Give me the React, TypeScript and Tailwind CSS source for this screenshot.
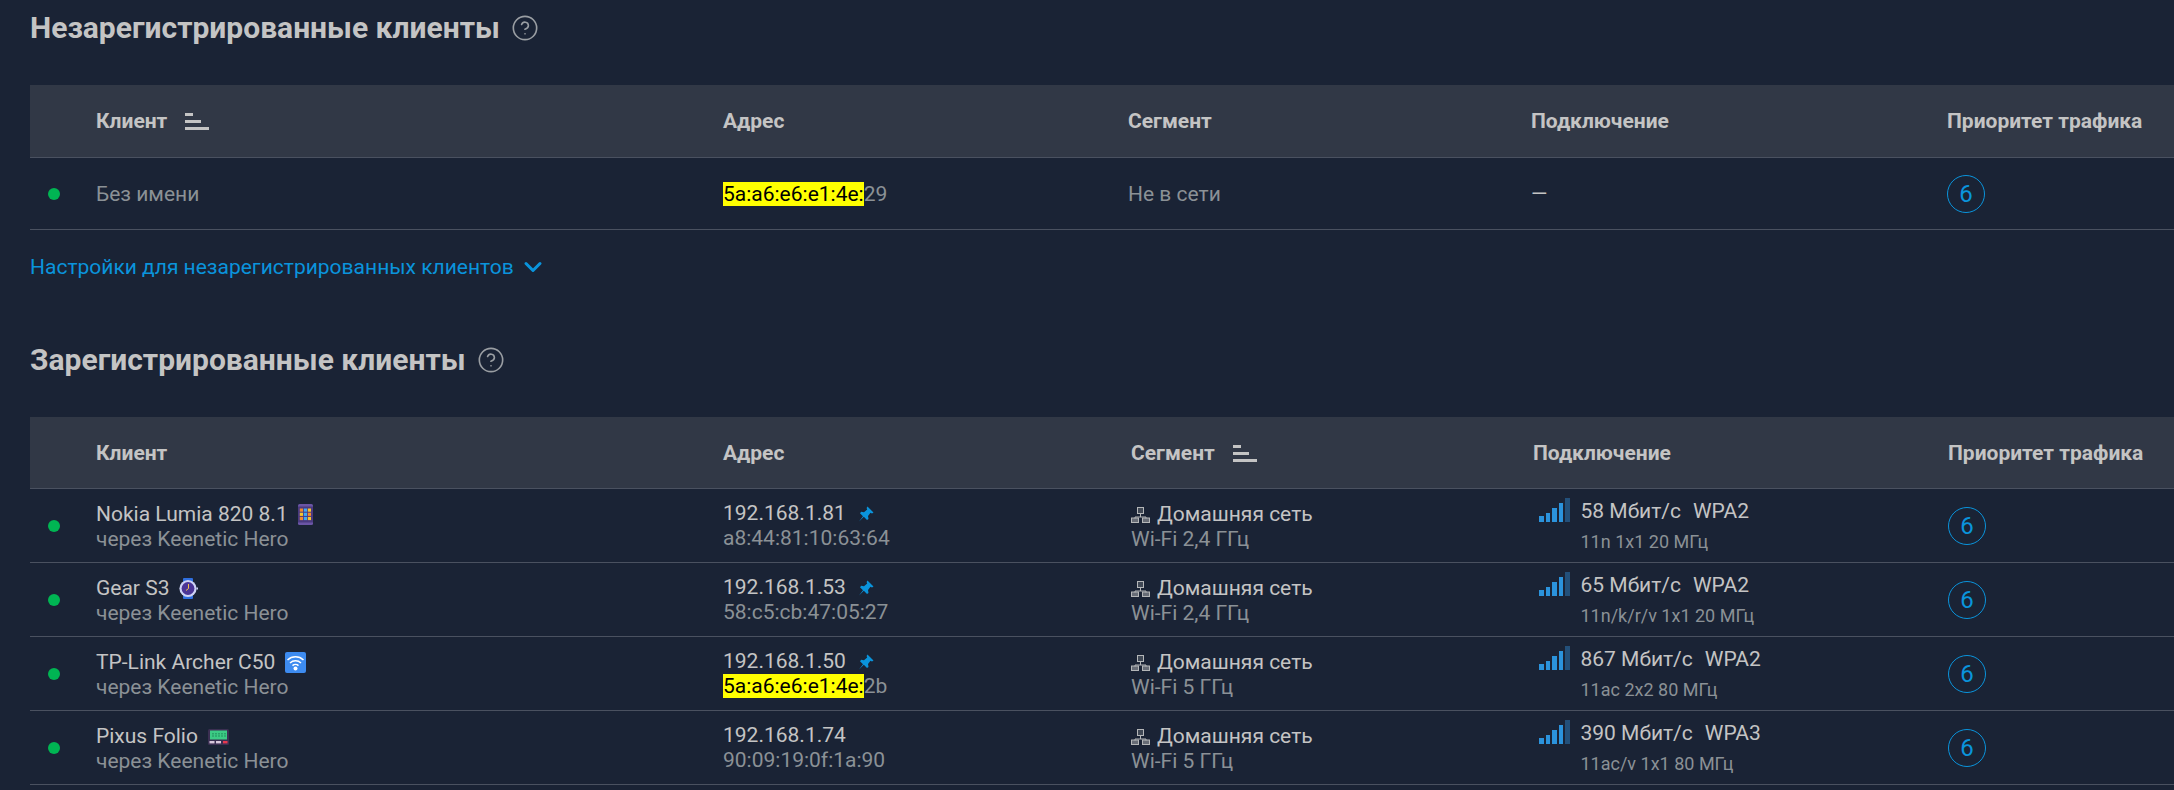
import { ChevronDown, CircleHelp } from 'lucide-react'

const FIRST_COLS = 'grid grid-cols-[66px_627px_405px_403px_416px_1fr]'
const SECOND_COLS = 'grid grid-cols-[66px_627px_408px_402px_415px_1fr]'

function SortIcon() {
  return (
    <span className="flex w-6 flex-col gap-[4px]">
      <span className="h-[3px] w-2 bg-[#c4c4c4]" />
      <span className="h-[3px] w-4 bg-[#c4c4c4]" />
      <span className="h-[3px] w-6 bg-[#c4c4c4]" />
    </span>
  )
}

function Dot() {
  return <span className="ml-[18px] block h-3 w-3 rounded-full bg-[#00b553]" />
}

function Title({ children }: { children: string }) {
  return (
    <div className="flex items-center gap-[11px]">
      <h2 className="text-[30px] leading-8 font-bold text-[#c4c4c4]">{children}</h2>
      <CircleHelp size={28} strokeWidth={1.4} className="text-[#9a9ea3]" />
    </div>
  )
}

function Pin() {
  return (
    <svg width="16" height="16" viewBox="0 0 16 16" className="shrink-0">
      <path d="M9.5 0.5 15.5 6.5 14 7.5 12.5 6.8 10 10 10.5 13 9 14 5.8 10.8 1 15.5 5 10.2 2 7.2 3.2 5.8 6 6.2 9.2 3.5 8.6 2Z" fill="#0a94dc" />
    </svg>
  )
}

function NetIcon() {
  return (
    <svg width="19" height="16" viewBox="0 0 19 16" className="shrink-0" fill="none" stroke="#b4b6b8" strokeWidth="1">
      <rect x="6.5" y="0.5" width="6" height="6" fill="#b4b6b8" fillOpacity="0.25" />
      <path d="M9.5 7v3M4 11.5V10h11v1.5" />
      <rect x="0.5" y="11" width="7" height="4.5" fill="#b4b6b8" fillOpacity="0.5" />
      <rect x="11.5" y="11" width="7" height="4.5" fill="#b4b6b8" fillOpacity="0.5" />
    </svg>
  )
}

function Bars() {
  return (
    <span className="flex h-6 shrink-0 items-end gap-[2px]">
      <span className="h-[6px] w-[4.5px] bg-[#2b93dc]" />
      <span className="h-[9px] w-[4.5px] bg-[#2b93dc]" />
      <span className="h-[14px] w-[4.5px] bg-[#2b93dc]" />
      <span className="h-[19px] w-[4.5px] bg-[#2b93dc]" />
      <span className="h-6 w-[4.5px] bg-[#23507a]" />
    </span>
  )
}

function Priority() {
  return (
    <span className="flex h-[38px] w-[38px] items-center justify-center rounded-full border border-[#0a94dc] text-2xl text-[#0a94dc]">
      6
    </span>
  )
}

function PhoneIcon() {
  const colors = ['#f08a2e', '#3fa9f5', '#f5c62e', '#f5c62e', '#3fa9f5', '#f08a2e', '#f08a2e', '#3fa9f5', '#f5c62e']
  return (
    <svg width="15" height="21" viewBox="0 0 15 21">
      <rect width="15" height="21" rx="1.5" fill="#6a55a5" />
      <rect y="2.5" width="15" height="16" fill="#4a3a80" />
      {colors.map((c, i) => (
        <rect key={i} x={1.8 + (i % 3) * 4} y={4.5 + Math.floor(i / 3) * 4.2} width="3.2" height="3.2" fill={c} />
      ))}
    </svg>
  )
}

function WatchIcon() {
  return (
    <svg width="19" height="21" viewBox="0 0 19 21">
      <rect x="4" y="0" width="10" height="21" rx="1" fill="#2f6fe0" />
      <circle cx="9" cy="10.5" r="8.6" fill="#cdd2f5" />
      <circle cx="9" cy="10.5" r="6.4" fill="#4b3596" />
      <path d="M9.5 6v4.5L7 12.5" stroke="#f3c64a" strokeWidth="1" fill="none" />
      <rect x="17.5" y="9.5" width="1.5" height="2" fill="#cdd2f5" />
    </svg>
  )
}

function WifiIcon() {
  return (
    <svg width="21" height="21" viewBox="0 0 21 21" fill="none">
      <rect width="21" height="21" rx="2" fill="#3d8bf0" />
      <path d="M2.5 8a11.5 11.5 0 0 1 16 0M5 11a8 8 0 0 1 11 0M7.5 13.6a4.4 4.4 0 0 1 6 0" stroke="#fff" strokeWidth="1.5" />
      <circle cx="10.5" cy="16.5" r="2" fill="#fff" />
    </svg>
  )
}

function PagerIcon() {
  return (
    <svg width="21" height="16" viewBox="0 0 21 16">
      <rect width="21" height="16" rx="1.5" fill="#3b2f52" />
      <rect x="2" y="1.5" width="17" height="9" fill="#3ccb85" />
      <path d="M5 4v4.5M8 4v4.5M11 4v4.5M14 4v4.5M17 4v4.5" stroke="#1f8a5a" strokeWidth="1.2" strokeDasharray="1.5 0.8" />
      <rect x="1.5" y="12" width="5" height="2.4" fill="#d8c8dc" />
      <rect x="8" y="12" width="5" height="2.4" fill="#d8c8dc" />
      <rect x="15" y="12" width="4.5" height="2.4" fill="#e8384f" />
    </svg>
  )
}

const CLIENTS = [
  { name: 'Nokia Lumia 820 8.1', icon: <PhoneIcon />, ip: '192.168.1.81', pin: true, mac: 'a8:44:81:10:63:64', band: 'Wi-Fi 2,4 ГГц', speed: '58 Мбит/с', sec: 'WPA2', mode: '11n 1x1 20 МГц' },
  { name: 'Gear S3', icon: <WatchIcon />, ip: '192.168.1.53', pin: true, mac: '58:c5:cb:47:05:27', band: 'Wi-Fi 2,4 ГГц', speed: '65 Мбит/с', sec: 'WPA2', mode: '11n/k/r/v 1x1 20 МГц' },
  { name: 'TP-Link Archer C50', icon: <WifiIcon />, ip: '192.168.1.50', pin: true, mac: '', band: 'Wi-Fi 5 ГГц', speed: '867 Мбит/с', sec: 'WPA2', mode: '11ac 2x2 80 МГц' },
  { name: 'Pixus Folio', icon: <PagerIcon />, ip: '192.168.1.74', pin: false, mac: '90:09:19:0f:1a:90', band: 'Wi-Fi 5 ГГц', speed: '390 Мбит/с', sec: 'WPA3', mode: '11ac/v 1x1 80 МГц' },
]

function Masked({ rest }: { rest: string }) {
  return (
    <>
      <span className="bg-[#ffff00] text-black">5a:a6:e6:e1:4e:</span>
      {rest}
    </>
  )
}

export default function App() {
  return (
    <div className="h-[790px] overflow-hidden bg-[#1a2335] pt-3 pl-[30px] font-['Roboto',sans-serif] text-[21px] leading-[25px] text-[#c4c4c4]">
      <Title>Незарегистрированные клиенты</Title>

      <div className="mt-[41px]">
        <div className={`${FIRST_COLS} h-[73px] items-center border-b border-[#4a5160] bg-[#313846] font-bold`}>
          <span />
          <span className="flex items-center gap-[18px]">
            Клиент
            <SortIcon />
          </span>
          <span>Адрес</span>
          <span>Сегмент</span>
          <span>Подключение</span>
          <span>Приоритет трафика</span>
        </div>
        <div className={`${FIRST_COLS} h-[72px] items-center border-b border-[#4a5160] pt-[1px] text-[#8b9196]`}>
          <Dot />
          <span>Без имени</span>
          <span>
            <Masked rest="29" />
          </span>
          <span>Не в сети</span>
          <span className="text-[#c4c4c4]">—</span>
          <Priority />
        </div>
      </div>

      <button className="mt-[23px] flex items-center gap-[5px] text-[#0a94dc]">
        Настройки для незарегистрированных клиентов
        <ChevronDown size={28} strokeWidth={2.6} />
      </button>

      <div className="mt-[63px]">
        <Title>Зарегистрированные клиенты</Title>
      </div>

      <div className="mt-[41px]">
        <div className={`${SECOND_COLS} h-[72px] items-center border-b border-[#4a5160] bg-[#313846] pt-[1px] font-bold`}>
          <span />
          <span>Клиент</span>
          <span>Адрес</span>
          <span className="flex items-center gap-[18px]">
            Сегмент
            <SortIcon />
          </span>
          <span>Подключение</span>
          <span>Приоритет трафика</span>
        </div>
        {CLIENTS.map((c) => (
          <div key={c.name} className={`${SECOND_COLS} h-[74px] items-center border-b border-[#4a5160]`}>
            <Dot />
            <div className="pt-[3px]">
              <div className="flex items-center gap-[10px]">
                {c.name}
                {c.icon}
              </div>
              <div className="text-[#8b9196]">через Keenetic Hero</div>
            </div>
            <div className="pt-[1px]">
              <div className="flex items-center gap-3">
                {c.ip}
                {c.pin && <Pin />}
              </div>
              <div className="text-[#8b9196]">{c.mac || <Masked rest="2b" />}</div>
            </div>
            <div className="pt-[3px]">
              <div className="flex items-center gap-[7px]">
                <NetIcon />
                Домашняя сеть
              </div>
              <div className="text-[#8b9196]">{c.band}</div>
            </div>
            <div className="flex items-start gap-[11px] pt-[2px] pl-[6px]">
              <Bars />
              <div className="pt-[1px]">
                <div className="flex gap-3">
                  <span>{c.speed}</span>
                  <span>{c.sec}</span>
                </div>
                <div className="mt-1 text-lg text-[#8b9196]">{c.mode}</div>
              </div>
            </div>
            <Priority />
          </div>
        ))}
      </div>
    </div>
  )
}
